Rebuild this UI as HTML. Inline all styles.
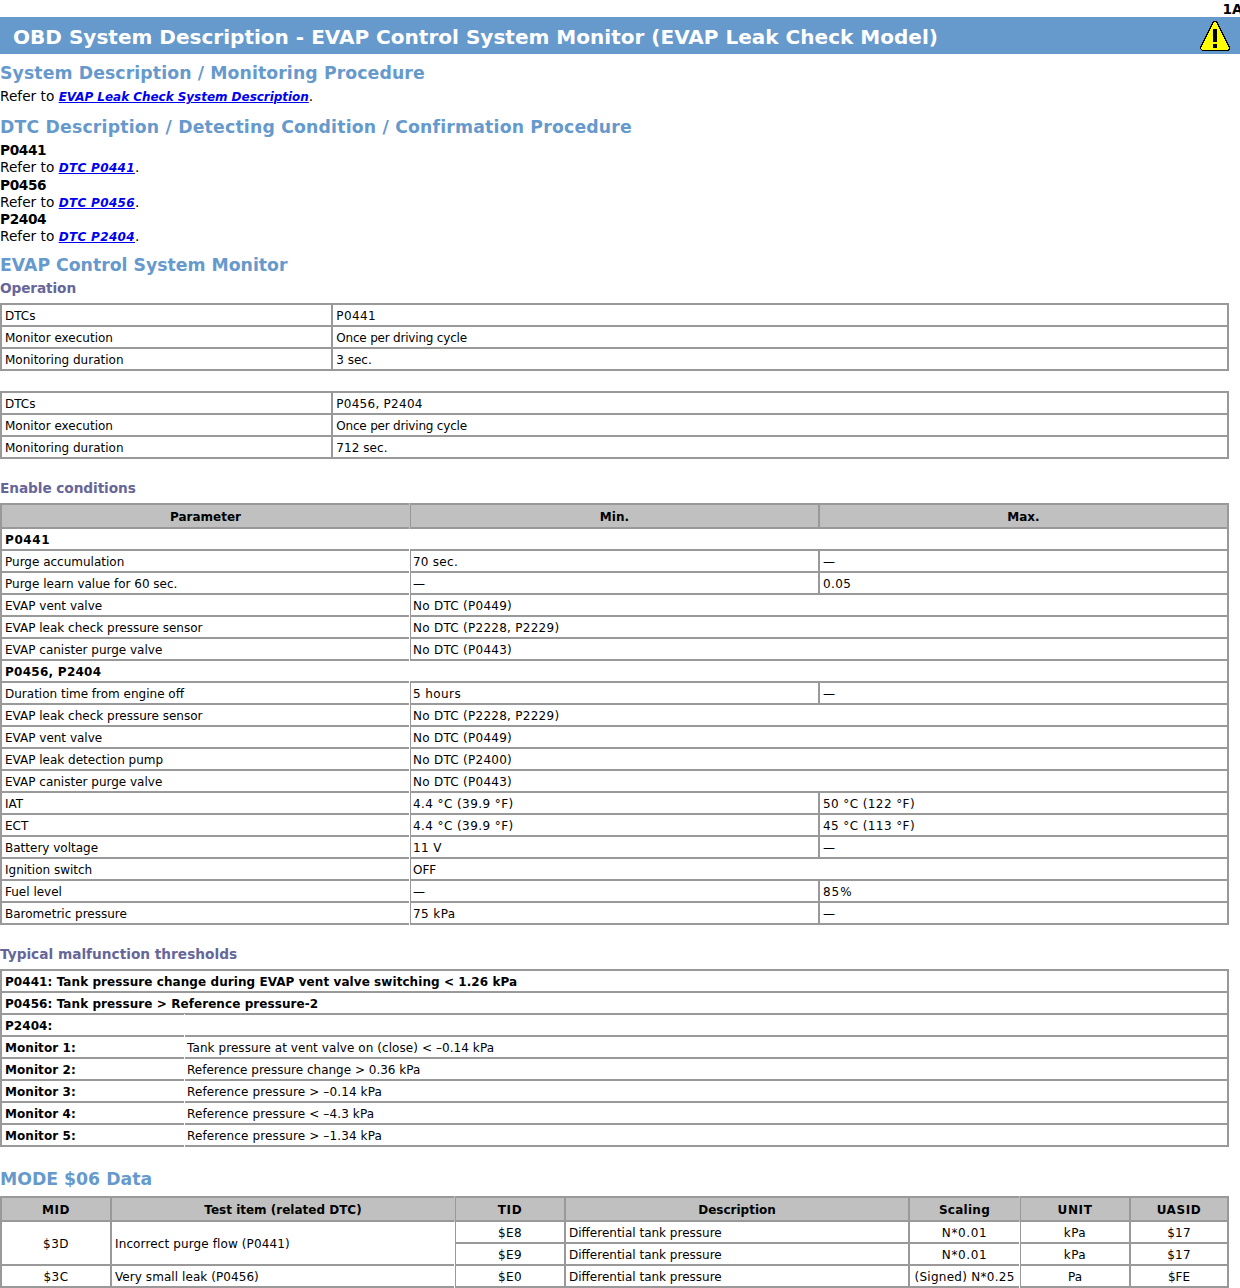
<!DOCTYPE html>
<html>
<head>
<meta charset="utf-8">
<title>OBD System Description - EVAP Control System Monitor (EVAP Leak Check Model)</title>
<style>
html,body{margin:0;padding:0;background:#fff;}
body{font-family:"DejaVu Sans","Liberation Sans",sans-serif;font-size:13.7px;line-height:17px;color:#000;width:1240px;overflow:hidden;}
.eng{height:17px;text-align:right;font-weight:bold;font-size:13.7px;line-height:17px;white-space:nowrap;overflow:hidden;position:relative;}
.eng span{position:absolute;left:1222.4px;top:1px;}
h1{margin:0;height:37px;background:#6699cc;color:#fff;font-size:20.05px;line-height:41px;font-weight:bold;padding-left:13px;overflow:hidden;position:relative;white-space:nowrap;}
h1 svg{position:absolute;left:1199px;top:3px;}
h2{margin:0;color:#6699cc;font-size:17.3px;font-weight:bold;line-height:22px;white-space:nowrap;}
h3{margin:0;color:#666699;font-size:13.7px;font-weight:bold;line-height:17px;white-space:nowrap;position:relative;top:1px;}
p{margin:0;}
b.l{letter-spacing:-0.4px;}
a.s{letter-spacing:0.33px;}
a.g{letter-spacing:-0.04px;}
a{color:#0000ee;font-weight:bold;font-style:italic;font-size:12px;text-decoration:underline;}
table{border-collapse:collapse;width:1229px;font-size:12px;line-height:15px;table-layout:fixed;}
td,th{border:2px solid #999;padding:4px 3px 1px 3px;height:15px;text-align:left;vertical-align:middle;font-weight:normal;white-space:nowrap;overflow:hidden;}
th{height:17px;background:#c0c0c0;font-weight:bold;text-align:center;}
td.b{font-weight:bold;letter-spacing:0.07px;}
td.c{text-align:center;}
td.nr{border-right:none;}
td.nl{border-left:none;}
td.k1{letter-spacing:.07px}td.k2{letter-spacing:.12px}td.k3,th.k3{letter-spacing:.27px}td.k4{letter-spacing:.42px}td.k6,th.k6{letter-spacing:.6px}td.k9{letter-spacing:1px}td.km{letter-spacing:-.2px}
.t3 td:nth-child(2){padding-left:2px;}
td.nl{padding-left:2px;}
.tw{position:relative;}
.tw i{position:absolute;display:block;width:1px;background:#fff;}
</style>
</head>
<body>
<div class="eng"><span>1A</span></div>
<h1>OBD System Description - EVAP Control System Monitor (EVAP Leak Check Model)<svg width="32" height="32" viewBox="0 0 32 32" shape-rendering="crispEdges"><path d="M14 1H18L31 27V29L29 31H3L1 29V27Z" fill="#000"/><path d="M15 2H17L29.8 27.6V28.8L28.6 30H3.4L2.2 28.8V27.6Z" fill="#ffff00"/><rect x="14" y="9" width="4" height="13" fill="#000"/><rect x="14" y="24" width="4" height="4" fill="#000"/></svg></h1>
<h2 style="margin-top:8px;letter-spacing:0.1px">System Description / Monitoring Procedure</h2>
<p style="margin-top:4px">Refer to <a class="g" href="#">EVAP Leak Check System Description</a>.</p>
<h2 style="margin-top:10px;letter-spacing:0.18px">DTC Description / Detecting Condition / Confirmation Procedure</h2>
<p style="margin-top:4px"><b class="l">P0441</b></p>
<p>Refer to <a class="s" href="#">DTC P0441</a>.</p>
<p><b class="l">P0456</b></p>
<p style="height:17px">Refer to <a class="s" href="#">DTC P0456</a>.</p>
<p><b class="l">P2404</b></p>
<p>Refer to <a class="s" href="#">DTC P2404</a>.</p>
<h2 style="margin-top:8px">EVAP Control System Monitor</h2>
<h3 style="margin-top:3px;letter-spacing:-.12px">Operation</h3>
<table style="margin-top:7px">
<colgroup><col style="width:27%"><col style="width:73%"></colgroup>
<tr><td>DTCs</td><td class="k4">P0441</td></tr>
<tr><td>Monitor execution</td><td class="km">Once per driving cycle</td></tr>
<tr><td>Monitoring duration</td><td>3 sec.</td></tr>
</table>
<table style="margin-top:20px">
<colgroup><col style="width:27%"><col style="width:73%"></colgroup>
<tr><td>DTCs</td><td class="k3">P0456, P2404</td></tr>
<tr><td>Monitor execution</td><td class="km">Once per driving cycle</td></tr>
<tr><td>Monitoring duration</td><td class="k1">712 sec.</td></tr>
</table>
<h3 style="margin-top:20px;letter-spacing:-.08px">Enable conditions</h3>
<div class="tw" style="margin-top:7px"><table class="t3">
<colgroup><col style="width:33.33%"><col style="width:33.33%"><col style="width:33.34%"></colgroup>
<tr><th>Parameter</th><th>Min.</th><th>Max.</th></tr>
<tr><td class="b k6" colspan="3">P0441</td></tr>
<tr><td>Purge accumulation</td><td class="k3">70 sec.</td><td>—</td></tr>
<tr><td>Purge learn value for 60 sec.</td><td>—</td><td class="k4">0.05</td></tr>
<tr><td>EVAP vent valve</td><td class="k3" colspan="2">No DTC (P0449)</td></tr>
<tr><td>EVAP leak check pressure sensor</td><td class="k3" colspan="2">No DTC (P2228, P2229)</td></tr>
<tr><td>EVAP canister purge valve</td><td class="k3" colspan="2">No DTC (P0443)</td></tr>
<tr><td class="b k3" colspan="3">P0456, P2404</td></tr>
<tr><td>Duration time from engine off</td><td class="k4">5 hours</td><td>—</td></tr>
<tr><td>EVAP leak check pressure sensor</td><td class="k3" colspan="2">No DTC (P2228, P2229)</td></tr>
<tr><td>EVAP vent valve</td><td class="k3" colspan="2">No DTC (P0449)</td></tr>
<tr><td>EVAP leak detection pump</td><td class="k3" colspan="2">No DTC (P2400)</td></tr>
<tr><td>EVAP canister purge valve</td><td class="k3" colspan="2">No DTC (P0443)</td></tr>
<tr><td>IAT</td><td class="k4">4.4 °C (39.9 °F)</td><td class="k4">50 °C (122 °F)</td></tr>
<tr><td>ECT</td><td class="k4">4.4 °C (39.9 °F)</td><td class="k4">45 °C (113 °F)</td></tr>
<tr><td>Battery voltage</td><td class="k4">11 V</td><td>—</td></tr>
<tr><td>Ignition switch</td><td colspan="2">OFF</td></tr>
<tr><td>Fuel level</td><td>—</td><td class="k9">85%</td></tr>
<tr><td>Barometric pressure</td><td class="k4">75 kPa</td><td>—</td></tr>
</table><i style="left:409px;top:0;height:26px;background:#c0c0c0"></i><i style="left:409px;top:46px;height:112px"></i><i style="left:409px;top:178px;height:244px"></i></div>
<h3 style="margin-top:20px">Typical malfunction thresholds</h3>
<div class="tw" style="margin-top:7px"><table>
<colgroup><col style="width:15%"><col style="width:85%"></colgroup>
<tr><td class="b" colspan="2">P0441: Tank pressure change during EVAP vent valve switching &lt; 1.26 kPa</td></tr>
<tr><td class="b" colspan="2">P0456: Tank pressure &gt; Reference pressure-2</td></tr>
<tr><td class="b" colspan="2">P2404:</td></tr>
<tr><td class="b nr">Monitor 1:</td><td class="nl k1">Tank pressure at vent valve on (close) &lt; –0.14 kPa</td></tr>
<tr><td class="b nr">Monitor 2:</td><td class="nl">Reference pressure change &gt; 0.36 kPa</td></tr>
<tr><td class="b nr">Monitor 3:</td><td class="nl k2">Reference pressure &gt; –0.14 kPa</td></tr>
<tr><td class="b nr">Monitor 4:</td><td class="nl k2">Reference pressure &lt; –4.3 kPa</td></tr>
<tr><td class="b nr">Monitor 5:</td><td class="nl k2">Reference pressure &gt; –1.34 kPa</td></tr>
</table><i style="left:184px;top:45px;height:1px"></i><i style="left:184px;top:66px;height:2px"></i><i style="left:184px;top:88px;height:2px"></i><i style="left:184px;top:110px;height:2px"></i><i style="left:184px;top:132px;height:2px"></i><i style="left:184px;top:154px;height:2px"></i><i style="left:184px;top:176px;height:2px"></i></div>
<h2 style="margin-top:21px">MODE $06 Data</h2>
<div class="tw" style="margin-top:6px"><table>
<colgroup><col style="width:110px"><col style="width:344px"><col style="width:110px"><col style="width:344px"><col style="width:111px"><col style="width:110px"><col style="width:98px"></colgroup>
<tr><th class="k6">MID</th><th>Test item (related DTC)</th><th class="k6">TID</th><th>Description</th><th class="k3">Scaling</th><th class="k6">UNIT</th><th class="k6">UASID</th></tr>
<tr><td class="c k4" rowspan="2">$3D</td><td class="k2" rowspan="2">Incorrect purge flow (P0441)</td><td class="c k4">$E8</td><td>Differential tank pressure</td><td class="c k6">N*0.01</td><td class="c k4">kPa</td><td class="c k3">$17</td></tr>
<tr><td class="c k4">$E9</td><td>Differential tank pressure</td><td class="c k6">N*0.01</td><td class="c k4">kPa</td><td class="c k3">$17</td></tr>
<tr><td class="c k4">$3C</td><td class="k1">Very small leak (P0456)</td><td class="c k4">$E0</td><td>Differential tank pressure</td><td class="c k3">(Signed) N*0.25</td><td class="c">Pa</td><td class="c">$FE</td></tr>
</table><i style="left:454px;top:0;height:26px;background:#c0c0c0"></i><i style="left:454px;top:26px;height:66px"></i><i style="left:1019px;top:0;height:26px;background:#c0c0c0"></i><i style="left:1019px;top:26px;height:66px"></i></div>
</body>
</html>
